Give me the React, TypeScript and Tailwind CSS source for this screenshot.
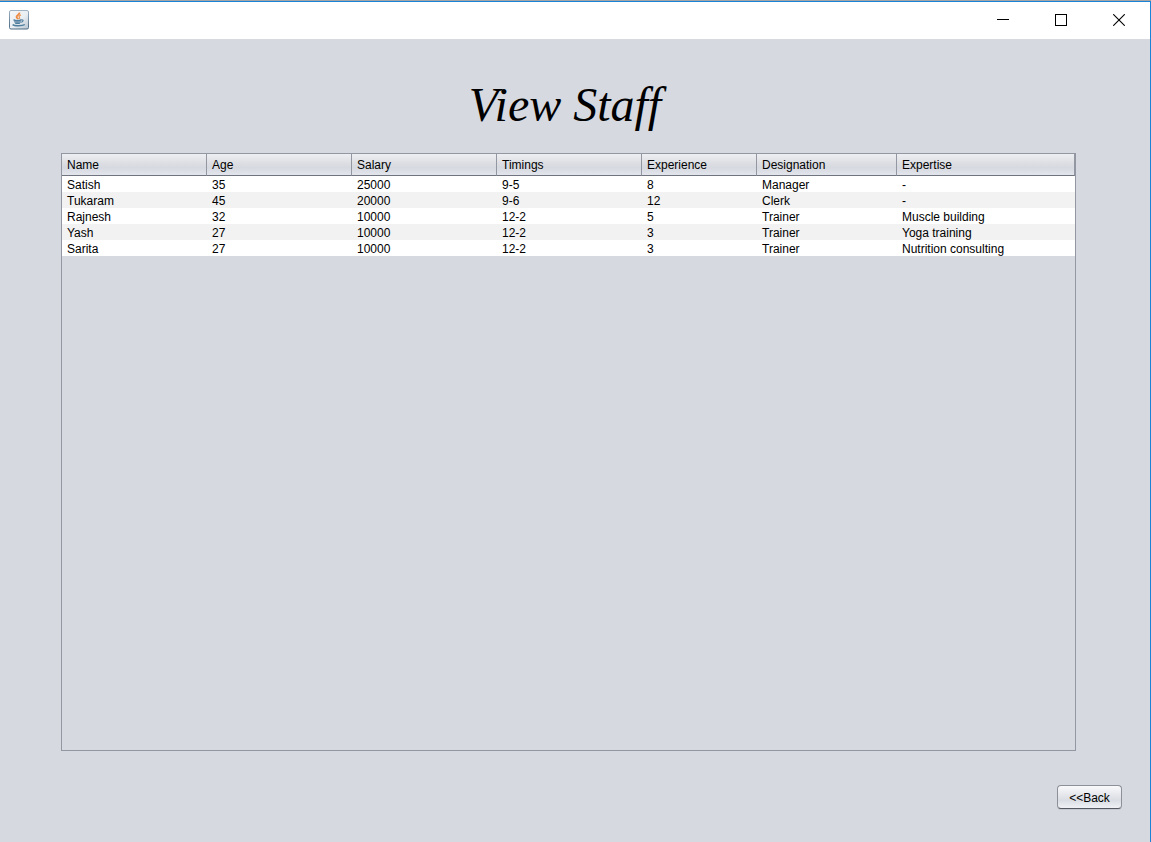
import React from "react";

type Staff = {
  name: string;
  age: number;
  salary: number;
  timings: string;
  experience: number;
  designation: string;
  expertise: string;
};

const staff: Staff[] = [
  { name: "Satish", age: 35, salary: 25000, timings: "9-5", experience: 8, designation: "Manager", expertise: "-" },
  { name: "Tukaram", age: 45, salary: 20000, timings: "9-6", experience: 12, designation: "Clerk", expertise: "-" },
  { name: "Rajnesh", age: 32, salary: 10000, timings: "12-2", experience: 5, designation: "Trainer", expertise: "Muscle building" },
  { name: "Yash", age: 27, salary: 10000, timings: "12-2", experience: 3, designation: "Trainer", expertise: "Yoga training" },
  { name: "Sarita", age: 27, salary: 10000, timings: "12-2", experience: 3, designation: "Trainer", expertise: "Nutrition consulting" },
];

const columns: { key: keyof Staff; label: string; width: string }[] = [
  { key: "name", label: "Name", width: "w-[145px]" },
  { key: "age", label: "Age", width: "w-[145px]" },
  { key: "salary", label: "Salary", width: "w-[145px]" },
  { key: "timings", label: "Timings", width: "w-[145px]" },
  { key: "experience", label: "Experience", width: "w-[115px]" },
  { key: "designation", label: "Designation", width: "w-[140px]" },
  { key: "expertise", label: "Expertise", width: "" },
];

function JavaIcon() {
  return (
    <svg width="20" height="20" viewBox="0 0 20 20" fill="none" aria-hidden="true">
      <defs>
        <linearGradient id="tile" x1="0" y1="0" x2="1" y2="1">
          <stop offset="0" stopColor="#f6f8fa" />
          <stop offset="0.55" stopColor="#e9eef2" />
          <stop offset="1" stopColor="#b6c4d0" />
        </linearGradient>
        <linearGradient id="edge" x1="0" y1="0" x2="0" y2="1">
          <stop offset="0" stopColor="#9eb2c3" />
          <stop offset="1" stopColor="#496982" />
        </linearGradient>
      </defs>
      <rect x="0.5" y="0.5" width="19" height="18.5" rx="1.5" fill="url(#tile)" stroke="url(#edge)" />
      <path d="M10.4 2.6c.6 1.9-3.1 2.6-2.9 4.4.1.9 1.3 1.4 1.6 2.3" stroke="#ee8a42" strokeWidth="1.8" />
      <path d="M12 4.9c-2.2.8-2.3 1.5-1.5 2.4.4.5 0 1.1-.5 1.6" stroke="#ee9a5c" strokeWidth="1.3" />
      <path d="M4.6 9.6c0 .7.6 3.9 2 4.1h3.8c1.5-.2 1.8-3.4 1.8-4.1-1.6 1-6 1-7.6 0z" fill="#7e9fb8" />
      <path d="M4.6 9.8c1.6 1 6 1 7.6 0M6.4 13.4h4.4" stroke="#507e9e" strokeWidth="1.2" />
      <path d="M12.2 9.9c2.8-.5 2.4 2-.7 2.4" stroke="#507e9e" strokeWidth="1.1" />
      <path d="M3.6 14.6c1.8 1.5 10 1.5 12.2-.1" stroke="#507e9e" strokeWidth="1.4" />
    </svg>
  );
}

const captionButton = "flex w-[58px] items-center justify-center text-black";

function TitleBar() {
  return (
    <header className="flex h-[37px] shrink-0 items-stretch justify-between bg-white pb-[2px] pl-[9px]">
      <div className="flex items-center">
        <JavaIcon />
      </div>
      <div className="flex pr-[2px]">
        <button type="button" aria-label="Minimize" className={captionButton}>
          <svg width="12" height="12" viewBox="0 0 12 12" shapeRendering="crispEdges">
            <path d="M0 5.5h12" stroke="currentColor" />
          </svg>
        </button>
        <button type="button" aria-label="Maximize" className={captionButton}>
          <svg width="12" height="12" viewBox="0 0 12 12" fill="none" shapeRendering="crispEdges">
            <rect x="0.5" y="0.5" width="11" height="11" stroke="currentColor" />
          </svg>
        </button>
        <button type="button" aria-label="Close" className={captionButton}>
          <svg width="12" height="12" viewBox="0 0 12 12" fill="none">
            <path d="M0.2 0.2l11.6 11.6M11.8 0.2L0.2 11.8" stroke="currentColor" strokeWidth="1.1" />
          </svg>
        </button>
      </div>
    </header>
  );
}

function StaffTable() {
  return (
    <table className="w-full table-fixed border-separate border-spacing-0 text-left">
      <thead>
        <tr>
          {columns.map((c) => (
            <th
              key={c.key}
              scope="col"
              className={`h-[22px] border-r border-b border-r-[#9297a1] border-b-[#6f747f] bg-[linear-gradient(#eeeff2_0%,#dcdee3_45%,#d6d9df_65%,#e2e5ec_100%)] p-0 pl-[5px] font-normal leading-4 ${c.width}`}
            >
              {c.label}
            </th>
          ))}
        </tr>
      </thead>
      <tbody>
        {staff.map((s) => (
          <tr key={s.name} className="bg-white even:bg-[#f2f2f2]">
            {columns.map((c) => (
              <td key={c.key} className="h-4 p-0 pt-[2px] pl-[5px] leading-[14px]">
                {s[c.key]}
              </td>
            ))}
          </tr>
        ))}
      </tbody>
    </table>
  );
}

export default function App() {
  return (
    <div className="flex min-h-screen flex-col border-t border-t-[#a5a5a5] bg-[#d6d9e0] font-['Liberation_Sans',Arial,sans-serif] text-[12px] text-black">
      <div className="flex flex-1 flex-col border-t border-r border-[#1883d7]">
        <TitleBar />
        <main className="flex flex-1 flex-col pt-[38px] pb-[33px]">
          <h1 className="pr-5 text-center font-['Liberation_Serif','Times_New_Roman',serif] text-[48px] leading-[56px] italic">
            View Staff
          </h1>
          <div className="mt-5 mr-[74px] ml-[61px] flex-1 border border-[#9297a1]">
            <StaffTable />
          </div>
          <div className="mt-[34px] mr-7 flex justify-end">
            <button
              type="button"
              className="h-6 w-[65px] rounded-[4px] border border-[#8d9098] border-b-[#55585f] bg-[linear-gradient(#fafafc_0%,#e3e5ea_45%,#dadde3_65%,#eef0f5_100%)] pt-px leading-4 shadow-[0_1px_0_#c4c8d0]"
            >
              &lt;&lt;Back
            </button>
          </div>
        </main>
      </div>
    </div>
  );
}
